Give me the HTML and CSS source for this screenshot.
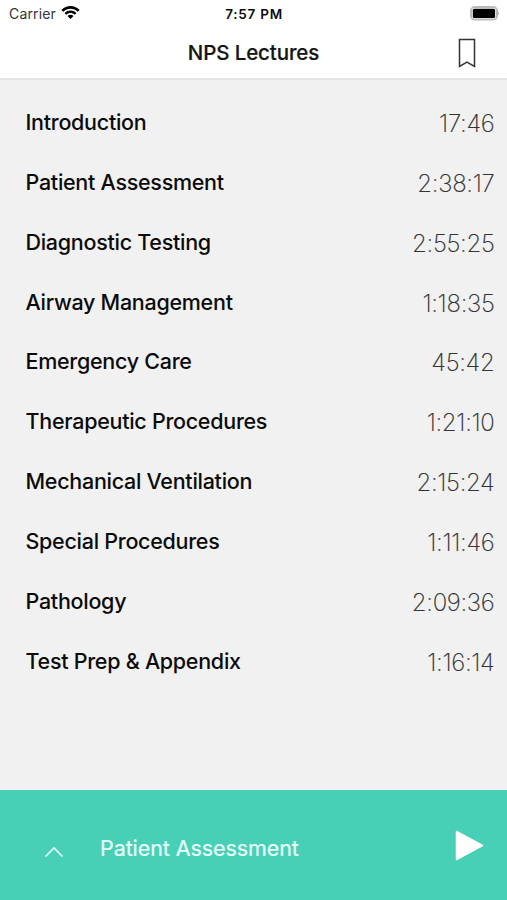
FILE: index.html
```html
<!DOCTYPE html>
<html lang="en">
<head>
<meta charset="utf-8">
<title>NPS Lectures</title>
<link rel="stylesheet" href="styles.css">
</head>
<body>
<div class="app">
  <header class="top">
    <div class="status">
      <div class="carrier"><span class="carrier-name">Carrier</span>
        <svg class="wifi" width="19" height="15" viewBox="0 0 19 15"><path d="M.4 5C5.500-.4 13.500-.4 18.600 5L16.800 6.700C12.500 2.600 6.500 2.600 2.200 6.700Z"/><path d="M3.500 8C7 4.700 12 4.700 15.500 8L13.700 9.700C11.200 7.400 7.800 7.400 5.300 9.700Z"/><path d="M6.500 11C8.200 9.400 10.800 9.400 12.500 11L9.500 14Z"/></svg>
      </div>
      <span class="clock">7:57 PM</span>
      <svg class="battery" width="29" height="15" viewBox="0 0 29 15"><rect class="shell" x="1" y="1" width="26" height="12.600" rx="3.800"/><rect x="2.800" y="2.700" width="22.300" height="9.200" rx="1.500"/><path class="tip" d="M27.400 5C29.300 5.800 29.300 8.800 27.400 9.600Z"/></svg>
    </div>
    <div class="nav">
      <h1>NPS Lectures</h1>
      <svg class="bookmark" width="18" height="30" viewBox="0 0 18 30"><path d="M1.500 1.500H16.500V28.500L9 24L1.500 28.500Z"/></svg>
    </div>
  </header>
  <main class="list">
    <div class="row"><span class="name">Introduction</span><span class="time">17:46</span></div>
    <div class="row"><span class="name">Patient Assessment</span><span class="time">2:38:17</span></div>
    <div class="row"><span class="name">Diagnostic Testing</span><span class="time">2:55:25</span></div>
    <div class="row"><span class="name">Airway Management</span><span class="time">1:18:35</span></div>
    <div class="row"><span class="name">Emergency Care</span><span class="time">45:42</span></div>
    <div class="row"><span class="name">Therapeutic Procedures</span><span class="time">1:21:10</span></div>
    <div class="row"><span class="name">Mechanical Ventilation</span><span class="time">2:15:24</span></div>
    <div class="row"><span class="name">Special Procedures</span><span class="time">1:11:46</span></div>
    <div class="row"><span class="name">Pathology</span><span class="time">2:09:36</span></div>
    <div class="row"><span class="name">Test Prep &amp; Appendix</span><span class="time">1:16:14</span></div>
  </main>
  <footer class="player">
    <svg class="chevron" width="20" height="12" viewBox="0 0 20 12"><path d="M1.500 10.500L10 2L18.500 10.500"/></svg>
    <span class="track">Patient Assessment</span>
    <svg class="play" width="29" height="31" viewBox="0 0 29 31"><path d="M1.500 1.500L27.500 15.500L1.500 29.500Z"/></svg>
  </footer>
</div>
</body>
</html>
```
FILE: styles.css
```css
* { box-sizing: border-box; }
body { margin: 0; font-family: Inter, "Liberation Sans", sans-serif; color: #0b0b0b; }
.app { display: flex; flex-direction: column; width: 507px; height: 900px; background: #f1f1f1; overflow: hidden; }
.top { height: 80px; background: #fff; border-bottom: 2px solid #e4e4e4; }
.status { display: grid; grid-template-columns: 1fr auto 1fr; align-items: center; height: 27px; padding: 0 8px 0 9px; }
.carrier { display: flex; align-items: center; gap: 5px; }
.carrier-name { font-size: 14px; letter-spacing: 0.150px; color: #333; }
.wifi { margin-bottom: 2px; }
.clock { font-size: 13.500px; font-weight: 600; letter-spacing: 0.750px; }
.battery { justify-self: end; }
.shell { fill: #fff; stroke: #bbb; stroke-width: 2; }
.tip { fill: #aaa; }
.nav { display: grid; grid-template-columns: 1fr auto 1fr; align-items: center; height: 51px; padding: 0 31px; }
h1 { grid-column: 2; margin: 0; font-size: 20.500px; line-height: 24px; font-weight: 500; letter-spacing: -0.120px; color: #151515; -webkit-text-stroke: 0.200px #151515; }
.bookmark { justify-self: end; }
.bookmark path { fill: none; stroke: #333; stroke-width: 1.500; }
.list { flex: 1; padding-top: 12px; }
.row { display: flex; align-items: center; justify-content: space-between; height: 59.880px; padding: 0 12.500px 0 25.500px; }
.name { font-size: 21.500px; font-weight: 500; letter-spacing: -0.280px; }
.time { padding-top: 3px; font-size: 24px; font-weight: 200; letter-spacing: -0.300px; color: #333; -webkit-text-stroke: 0.150px #333; }
.player { display: flex; align-items: center; height: 110px; padding: 0 23px 0 44px; background: #48d0b7; color: #fff; }
.chevron { margin-top: 13px; }
.chevron path { fill: none; stroke: #e8fffa; stroke-width: 1.700; }
.track { margin-left: 36px; padding-top: 6px; font-size: 21.500px; letter-spacing: -0.080px; color: #e8fffa; -webkit-text-stroke: 0.200px #e8fffa; }
.play { margin-left: auto; fill: #fff; stroke: #fff; stroke-width: 1.500; stroke-linejoin: round; }
```
